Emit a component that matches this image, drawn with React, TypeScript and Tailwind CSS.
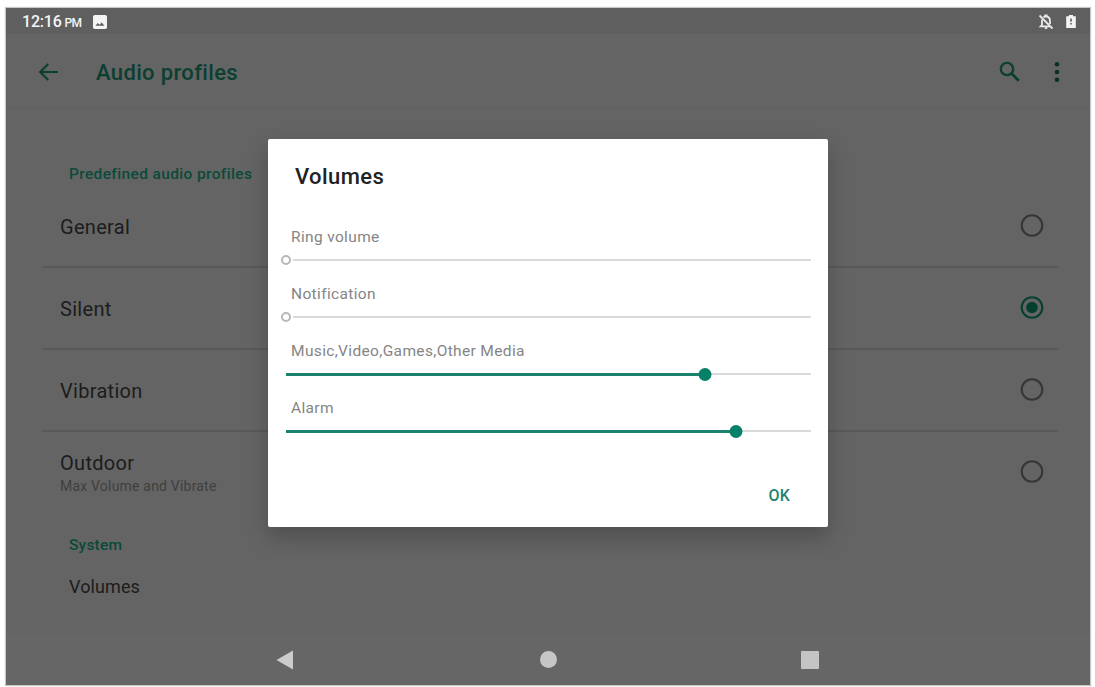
type Profile = { name: string; note?: string; selected?: boolean };
type Volume = { label: string; value: number };

const profiles: Profile[] = [
  { name: 'General' },
  { name: 'Silent', selected: true },
  { name: 'Vibration' },
  { name: 'Outdoor', note: 'Max Volume and Vibrate' },
];

const volumes: Volume[] = [
  { label: 'Ring volume', value: 0 },
  { label: 'Notification', value: 0 },
  { label: 'Music,Video,Games,Other Media', value: 79.9 },
  { label: 'Alarm', value: 85.8 },
];

function StatusBar() {
  return (
    <div className="flex h-[26px] items-center bg-[#5f5f5f] pr-[14px] pl-[16px] text-[#f4f4f4]">
      <span className="pt-[2px] text-[16px] leading-[26px] font-medium tracking-[-0.2px]">12:16</span>
      <span className="ml-[3px] pt-[4px] text-[12px] leading-[20px] font-medium tracking-[-0.7px]">PM</span>
      <svg className="mt-[2px] ml-[12px]" width="14" height="14" viewBox="0 0 14 14">
        <rect width="14" height="14" rx="1.8" fill="#f4f4f4" />
        <path d="M2.5 10.8l2.2-2.8 1.8 1.8 2.2-2.4 2.8 3.4z" fill="#5f5f5f" />
      </svg>
      <svg className="mt-[2px] ml-auto" width="16" height="16" viewBox="0 0 16 16" fill="none" stroke="#e8e8e8" strokeWidth="1.8">
        <path d="M1.5 1.5l13 13" />
        <path d="M5.5 3.3Q6.3 2.7 7.3 2.5V1.3h1.4v1.2Q12 3.2 12 7v3" />
        <path d="M4.3 5.6Q4 6.3 4 7v4.2L2.8 12.3H12" />
        <path d="M6.7 14h2.6" />
      </svg>
      <svg className="mt-px ml-[12px]" width="10" height="13" viewBox="0 0 10 13">
        <path d="M3 0h4v1.3h2.8V13H.2V1.3H3z" fill="#f4f4f4" />
        <path d="M4.2 3.6h1.6v3.2H4.2zM4.2 8h1.6v1.4H4.2z" fill="#5f5f5f" />
      </svg>
    </div>
  );
}

function Toolbar() {
  return (
    <header className="flex h-[74px] items-center border-b border-[#606060] pt-[2px] pr-[28px] pl-[32px]">
      <svg width="20" height="18" viewBox="0 0 20 18" fill="none" stroke="#0b3f32" strokeWidth="2.2">
        <path d="M20 9H2.5M10.2 1L2.2 9l8 8" />
      </svg>
      <h1 className="ml-[38px] pt-[2px] text-[22px] font-medium tracking-[0.35px] text-[#0b3f32]">Audio profiles</h1>
      <svg className="ml-auto" width="22" height="22" viewBox="0 0 22 22" fill="none" stroke="#0b3f32">
        <circle cx="8" cy="8" r="6.2" strokeWidth="2.3" />
        <path d="M12.6 12.6l7.2 7.2" strokeWidth="2.8" />
      </svg>
      <svg className="ml-[31px]" width="10" height="22" viewBox="0 0 10 22" fill="#0b3029">
        <circle cx="5" cy="3.3" r="2.3" />
        <circle cx="5" cy="11" r="2.3" />
        <circle cx="5" cy="18.7" r="2.3" />
      </svg>
    </header>
  );
}

function Radio({ on }: { on?: boolean }) {
  return (
    <svg width="24" height="24" viewBox="0 0 24 24">
      <circle cx="12" cy="11.5" r="10.3" fill="none" stroke={on ? '#073f31' : '#363636'} strokeWidth="2.1" />
      {on && <circle cx="12" cy="11.5" r="5.8" fill="#023f2f" />}
    </svg>
  );
}

function ProfileRow({ profile, last }: { profile: Profile; last: boolean }) {
  return (
    <li
      className={`flex h-[82px] items-center justify-between border-b-2 pr-[14px] pl-[18px] ${last ? 'border-transparent' : 'border-[#595959]'}`}
    >
      <div className="pt-[2px]">
        <div className="text-[20px] leading-[26px] tracking-[0.3px] text-[#1c1c1c]">{profile.name}</div>
        {profile.note && <div className="text-[14px] leading-[21px] tracking-[0.2px] text-[#404040]">{profile.note}</div>}
      </div>
      <Radio on={profile.selected} />
    </li>
  );
}

function Slider({ volume }: { volume: Volume }) {
  const active = volume.value > 0;
  return (
    <div className="h-[57px]">
      <div className="pl-[5px] text-[15.5px] leading-[20px] tracking-[0.35px] text-[#858585]">{volume.label}</div>
      <div className="relative mt-[6px] flex h-[14px] items-center">
        <div className="h-[2px] w-full bg-[#dadada]" />
        {active ? (
          <>
            <div className="absolute top-[5.5px] left-0 h-[3px] bg-[#1b8270]" style={{ width: `${volume.value}%` }} />
            <div
              className="absolute top-[0.5px] size-[13px] -translate-x-1/2 rounded-full bg-[#078068]"
              style={{ left: `${volume.value}%` }}
            />
          </>
        ) : (
          <div className="absolute top-px -left-[7px] flex h-[12px] w-[14px] items-center justify-center bg-white">
            <div className="size-[10px] rounded-full border-2 border-[#b8b8b8]" />
          </div>
        )}
      </div>
    </div>
  );
}

function VolumesDialog() {
  return (
    <div
      role="dialog"
      className="absolute top-[131px] left-[262px] flex h-[388px] w-[560px] flex-col rounded-[2px] bg-white shadow-[0_10px_22px_0_rgba(0,0,0,0.22)]"
    >
      <h2 className="flex h-[74px] items-center pl-[27px] text-[22px] font-medium tracking-[0.4px] text-[#222222]">Volumes</h2>
      <div className="mt-[14px] pr-[17px] pl-[18px]">
        {volumes.map((v) => (
          <Slider key={v.label} volume={v} />
        ))}
      </div>
      <div className="flex justify-end pt-[29px] pr-[38px]">
        <button className="text-[16px] leading-[24px] font-medium tracking-[0.2px] text-[#23836f]">OK</button>
      </div>
    </div>
  );
}

function NavBar() {
  return (
    <nav className="mt-auto flex h-[51px] items-center bg-[#666666] pl-[270px]">
      <svg width="18" height="20" viewBox="0 0 18 20">
        <path d="M17 .5v19L.5 10z" fill="#cccccc" />
      </svg>
      <div className="ml-[246px] size-[17px] rounded-full bg-[#c6c6c6]" />
      <div className="ml-[244px] size-[18px] rounded-[1px] bg-[#c4c4c4]" />
    </nav>
  );
}

export default function App() {
  return (
    <div className="flex h-[687px] w-[1095px] bg-white pt-[8px] pl-[6px] font-[Roboto,sans-serif]">
      <div className="relative flex h-[677px] w-[1084px] flex-col bg-[#646464] shadow-[0_0_1px_1px_#c8c8c8]">
        <StatusBar />
        <Toolbar />
        <main className="pr-[32px] pl-[36px]">
          <h3 className="pt-[55px] pl-[27px] text-[15.5px] leading-[22px] font-medium tracking-[0.36px] text-[#0b4a3a]">
            Predefined audio profiles
          </h3>
          <ul className="pt-px">
            {profiles.map((p, i) => (
              <ProfileRow key={p.name} profile={p} last={i === profiles.length - 1} />
            ))}
          </ul>
          <h3 className="pt-[20px] pl-[27px] text-[15.5px] leading-[22px] font-medium tracking-[0.2px] text-[#0b4a3a]">System</h3>
          <div className="pt-[19px] pl-[27px] text-[18px] leading-[24px] tracking-[0.1px] text-[#1c1c1c]">Volumes</div>
        </main>
        <NavBar />
        <VolumesDialog />
      </div>
    </div>
  );
}
